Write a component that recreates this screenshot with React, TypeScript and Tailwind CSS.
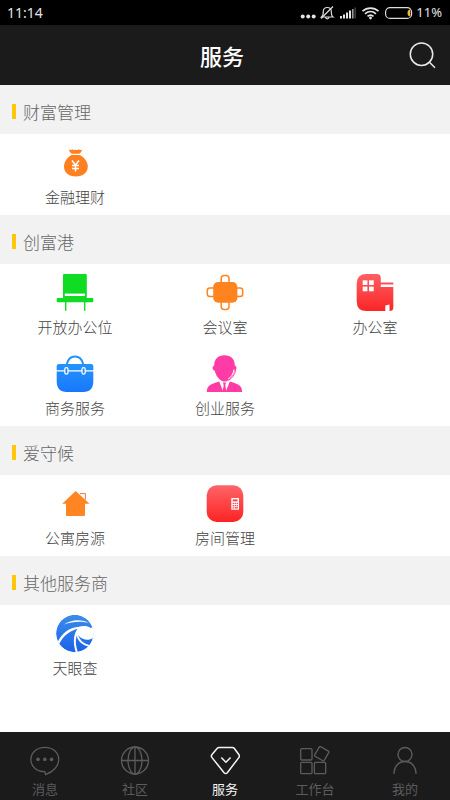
import React from 'react';

interface Service {
  name: string;
  icon: React.ReactNode;
}

interface Section {
  title: string;
  services: Service[];
}

interface Tab {
  name: string;
  icon: React.ReactNode;
}

const MoneyBagIcon = () => (
  <svg viewBox="0 0 38 38" className="size-[38px]" aria-hidden="true">
    <path
      fill="#ff8020"
      d="M13 5.2c1.3 1 2.2.8 3.2.1 1.1.8 2.1.9 3.2.1 1.2.8 2.3.7 3.4-.1.9.7 2 .9 3.2.1-.2 2-1.2 3.4-2.8 4.3h-7.3c-1.7-1-2.6-2.5-2.9-4.5z"
    />
    <path
      fill="#ff8020"
      d="M15.5 11h8.3c4.7 2.7 8 6.9 8 11.6 0 6.2-4.9 9.9-12 9.9S8 28.8 8 22.6c0-4.700 3-8.900 7.500-11.600z"
    />
    <path
      fill="none"
      stroke="#fff"
      strokeWidth="1.5"
      d="M16 16.5l3.500 4.500 3.500-4.500M19.500 21v6.500M16 21.500h7M16 24.500h7"
    />
  </svg>
);

const ChairIcon = () => (
  <svg viewBox="0 0 38 38" className="size-[38px]" aria-hidden="true">
    <g fill="#0fdc22">
      <path d="M8 0h22q.8 0 .8.8V24H7V.8Q7 0 8 0z" />
      <rect x="0.7" y="24" width="36.6" height="4.2" rx="1" />
      <rect x="9" y="28" width="1.4" height="8.8" />
      <rect x="28" y="28" width="1.4" height="8.8" />
    </g>
    <rect x="8.8" y="19.6" width="20.2" height="2.4" fill="#fff" />
  </svg>
);

const MeetingIcon = () => (
  <svg viewBox="0 0 38 38" className="size-[38px]" aria-hidden="true">
    <g fill="none" stroke="#ff8420" strokeWidth="1.5">
      <rect x="15.2" y="1.6" width="7.8" height="12" rx="3" />
      <rect x="15.2" y="23.4" width="7.8" height="12" rx="3" />
      <rect x="1.3" y="14" width="12" height="8.6" rx="2.5" />
      <rect x="24.7" y="14" width="12" height="8.6" rx="2.5" />
    </g>
    <rect x="7.2" y="8" width="24.2" height="20.8" rx="5" fill="#ff8420" />
  </svg>
);

const OfficeIcon = () => (
  <svg viewBox="0 0 38 38" className="size-[38px]" aria-hidden="true">
    <defs>
      <linearGradient id="office" x1="0" y1="0" x2="0" y2="1">
        <stop offset="0" stopColor="#ff6064" />
        <stop offset="1" stopColor="#fb2526" />
      </linearGradient>
    </defs>
    <path
      fill="url(#office)"
      d="M10.5 0H21q3.800 0 3.800 3.800V8.600h12.500v1.900H24.800V13h12.500v20.500q0 3.500-3.800 3.500v-6.500l-4.200 1V37H10.500Q.7 37 .7 27.500V9.500Q.7 0 10.500 0z"
    />
    <g fill="#fff">
      <rect x="6.7" y="6.3" width="4.7" height="4.7" />
      <rect x="13" y="6.3" width="4.7" height="4.7" />
      <rect x="6.7" y="12.6" width="4.7" height="4.7" />
      <rect x="13" y="12.6" width="4.7" height="4.7" />
    </g>
  </svg>
);

const BriefcaseIcon = () => (
  <svg viewBox="0 0 38 38" className="size-[38px]" aria-hidden="true">
    <defs>
      <linearGradient id="briefcase" x1="0" y1="0" x2="0" y2="1">
        <stop offset="0" stopColor="#2593fb" />
        <stop offset="1" stopColor="#1878fc" />
      </linearGradient>
    </defs>
    <path fill="none" stroke="#2593fb" strokeWidth="2" d="M10.800 9C12 4 15 1.400 19 1.400S26 4 27.200 9" />
    <path
      fill="url(#briefcase)"
      d="M3 9h32q2.300 0 2.300 2.300V26q0 11-10 11H10.700Q.7 37 .7 26V11.300Q.7 9 3 9z"
    />
    <path stroke="#fff" strokeWidth="1.3" d="M0 15.800h38" />
    <g fill="#1f88fb" stroke="#fff" strokeWidth="1.3">
      <rect x="8.800" y="12.600" width="3.2" height="6.6" rx="1.6" />
      <rect x="26" y="12.600" width="3.2" height="6.6" rx="1.6" />
    </g>
  </svg>
);

const AgentIcon = () => (
  <svg viewBox="0 0 38 38" className="size-[38px]" aria-hidden="true">
    <g fill="#ff3ca5">
      <path d="M18.500.2c6.300 0 10.500 4 10.300 10.300 2.300.7 2.200 4.700-.3 5.200-1.200 5.200-4.500 8.800-7.200 10.200-1.700.9-3.700.9-5.400 0-2.700-1.400-6-5-7.200-10.200-2.500-.5-2.800-4.500-.5-5.200C8 4.200 12.200.2 18.500.2z" />
      <path d="M.8 37c.2-6 2.800-7.600 12.400-10.500l4.200 10.500zM19.600 37l4.200-10.500C33.500 29.400 36 31 36.200 37z" />
      <path d="M17 27.500h3l-.7 2.800L20.500 37h-4l1.200-6.700z" />
    </g>
    <path fill="none" stroke="#fff" strokeWidth="1" d="M28 14.500c-.8 4.500-2.800 7.700-6 9.700" />
    <path fill="none" stroke="#ff3ca5" strokeWidth="1" d="M29.600 15c-.8 5-3.600 8.500-7.400 10.400" />
  </svg>
);

const HouseIcon = () => (
  <svg viewBox="0 0 38 38" className="size-[38px]" aria-hidden="true">
    <path fill="#ff8522" d="M19.700 6l13.800 12.700H29V30q0 1-1 1H11q-1 0-1-1V18.700H6.200z" />
    <path fill="none" stroke="#ef7048" strokeWidth="1" d="M24 8.600h5.400v6" />
  </svg>
);

const RoomIcon = () => (
  <svg viewBox="0 0 38 38" className="size-[38px]" aria-hidden="true">
    <defs>
      <linearGradient id="room" x1="0" y1="0" x2="0" y2="1">
        <stop offset="0" stopColor="#ff6468" />
        <stop offset="1" stopColor="#fc2323" />
      </linearGradient>
    </defs>
    <rect x="0.7" y="0.3" width="36.6" height="36.7" rx="10" fill="url(#room)" />
    <rect x="25.3" y="13" width="7.7" height="11.7" fill="#fff" />
    <g fill="#fa4346">
      <rect x="26.8" y="14.4" width="4.7" height="2" />
      <rect x="26.6" y="17.8" width="1.3" height="1.3" />
      <rect x="28.6" y="17.8" width="1.3" height="1.3" />
      <rect x="30.6" y="17.8" width="1.3" height="1.3" />
      <rect x="26.6" y="20" width="1.3" height="1.3" />
      <rect x="28.6" y="20" width="1.3" height="1.3" />
      <rect x="30.6" y="20" width="1.3" height="1.3" />
      <rect x="26.6" y="22.2" width="1.3" height="1.3" />
      <rect x="28.6" y="22.2" width="3.3" height="1.3" />
    </g>
  </svg>
);

const EyeCheckIcon = () => (
  <svg viewBox="0 0 38 38" className="size-[38px]" aria-hidden="true">
    <defs>
      <linearGradient id="eye" x1="0" y1="0" x2="0" y2="1">
        <stop offset="0" stopColor="#3b8dea" />
        <stop offset="1" stopColor="#1c62e8" />
      </linearGradient>
      <clipPath id="eye-clip">
        <circle cx="18.8" cy="18.5" r="18.7" />
      </clipPath>
    </defs>
    <g clipPath="url(#eye-clip)">
      <circle cx="18.8" cy="18.5" r="18.7" fill="url(#eye)" />
      {/* Top wisp */}
      <path fill="#fff" d="M8 9.500C14 4.800 25 3.300 34 8.200 26 5.800 16.500 6.200 8 9.500z" />
      {/* Pupil, open on the right */}
      <path
        fill="#fff"
        d="M22 12.200c4.500-1.700 9.500-1.400 12.500.8 1-.3 2-.9 2.500-1.500l2 8c-1 3-3.200 5-6.500 5.200-4 .3-8-1.400-10.300-4.500-1.500-2.200-1.700-5.500-.2-8z"
      />
      {/* Blades */}
      <path fill="#fff" d="M1 28.500C5 19 12.500 12.500 23.500 11.800l1 1.700C14.500 14.500 7 20.500 2.500 30.500z" />
      <path fill="#fff" d="M20.500 15c-3.500 7-3.300 14.500-.5 23h2.200c-3-8-3.200-14.500-.2-21z" />
      <path fill="#fff" d="M21.500 17.500c1 6.500 5.500 11.500 14 13l-1 1.500c-9-1.500-13.800-7-14.200-13.500z" />
    </g>
  </svg>
);

const SearchIcon = () => (
  <svg viewBox="0 0 28 28" className="size-7" fill="none" stroke="#e8e8e8" strokeWidth="1.5" aria-hidden="true">
    <circle cx="13.5" cy="13.2" r="11.2" />
    <path d="M21.500 21.200l5.500 5.600" />
  </svg>
);

const StatusIcons = () => (
  <svg viewBox="0 0 114 16" className="h-4 w-[114px]" fill="none" aria-hidden="true">
    {/* More dots */}
    <g fill="#e4e4e4">
      <circle cx="2.7" cy="11.5" r="2" />
      <circle cx="8.2" cy="11.5" r="2" />
      <circle cx="13.7" cy="11.5" r="2" />
    </g>
    {/* Muted bell */}
    <g stroke="#dcdcdc" strokeWidth="1.2">
      <path d="M21.500 12h11.500c-1.800-1.300-1.700-3-1.700-5.500 0-2.400-1.300-4-4-4s-4 1.600-4 4c0 2.500 0 4.200-1.800 5.500zM25.500 12.500c.3 1.700 3.200 1.700 3.500 0" />
      <path d="M21 13.500L33 1.500" />
    </g>
    {/* Signal */}
    <g fill="#e4e4e4">
      <rect x="40" y="11" width="2" height="2.5" />
      <rect x="43" y="9.5" width="2" height="4" />
      <rect x="46" y="7.5" width="2" height="6" />
      <rect x="49" y="5.5" width="2" height="8" />
      <rect x="52" y="4" width="1.6" height="9.5" fill="#9a9a9a" />
      <rect x="54.5" y="2.5" width="1.3" height="11" fill="#4a4a4a" />
    </g>
    {/* Wifi */}
    <g stroke="#e4e4e4" strokeWidth="1.7">
      <path d="M62.500 6.200c4.500-4.200 11.500-4.200 16 0M65 8.900c3.300-3 7.700-3 11 0M67.500 11.300c2-1.700 4-1.700 6 0" />
    </g>
    <circle cx="70.500" cy="13" r="1.4" fill="#e4e4e4" />
    {/* Battery */}
    <rect x="85.600" y="2.600" width="26" height="10.800" rx="4.5" stroke="#dcdcdc" strokeWidth="1.2" />
    <path d="M110.300 4.500v7q-2.800-.3-2.800-3.500t2.800-3.500z" fill="#f5b83d" />
  </svg>
);

const MessageIcon = () => (
  <svg viewBox="0 0 30 30" className="size-[30px]" fill="none" stroke="currentColor" strokeWidth="1.3" aria-hidden="true">
    <path
      strokeLinejoin="round"
      d="M15 1.400c7.800 0 13.700 5 13.700 12.100 0 6.500-5.500 12.500-13.200 15.200l-.5-3C6.500 25.500.9 20.500.9 13.500.9 6.400 7.200 1.400 15 1.400z"
    />
    <g fill="currentColor" stroke="none">
      <circle cx="8" cy="13.400" r="1.8" />
      <circle cx="14.800" cy="13.400" r="1.8" />
      <circle cx="21.600" cy="13.400" r="1.8" />
    </g>
  </svg>
);

const GlobeIcon = () => (
  <svg viewBox="0 0 30 30" className="size-[30px]" fill="none" stroke="currentColor" strokeWidth="1.3" aria-hidden="true">
    <circle cx="15" cy="14.5" r="13.5" />
    <ellipse cx="15" cy="14.5" rx="7" ry="13.5" />
    <path d="M15 1v27M1.500 14.500h27" />
  </svg>
);

const DiamondIcon = () => (
  <svg
    viewBox="0 0 30 30"
    className="size-[30px]"
    fill="none"
    stroke="currentColor"
    strokeWidth="1.5"
    strokeLinejoin="round"
    aria-hidden="true"
  >
    <path d="M9 1.500h13.500q1 0 1.700.8l4.600 6.200q1.200 1.500 0 3.100L17.300 26.700q-1.600 1.700-3.200 0L2 11.600q-1.300-1.600 0-3.100l5.300-6.200q.7-.8 1.700-.8z" />
    <path d="M11.300 11.500l4.600 4.800 4.700-4.800" />
  </svg>
);

const WorkbenchIcon = () => (
  <svg viewBox="0 0 30 30" className="size-[30px]" fill="none" stroke="currentColor" strokeWidth="1.3" aria-hidden="true">
    <rect x="0.7" y="2.7" width="11.3" height="11.3" rx="1" />
    <rect x="0.7" y="16.4" width="11.3" height="11.3" rx="1" />
    <rect x="14.4" y="16.4" width="11.3" height="11.3" rx="1" />
    <rect x="16.2" y="2.2" width="11" height="11" rx="1" transform="rotate(30 21.700 7.700)" />
  </svg>
);

const PersonIcon = () => (
  <svg viewBox="0 0 30 30" className="size-[30px]" fill="none" stroke="currentColor" strokeWidth="1.4" aria-hidden="true">
    <circle cx="15" cy="8.5" r="7" />
    <path d="M4 28c0-7.500 4.500-12.500 11-12.500s11 5 11 12.500" />
  </svg>
);

const sections: Section[] = [
  {
    title: '财富管理',
    services: [{ name: '金融理财', icon: <MoneyBagIcon /> }],
  },
  {
    title: '创富港',
    services: [
      { name: '开放办公位', icon: <ChairIcon /> },
      { name: '会议室', icon: <MeetingIcon /> },
      { name: '办公室', icon: <OfficeIcon /> },
      { name: '商务服务', icon: <BriefcaseIcon /> },
      { name: '创业服务', icon: <AgentIcon /> },
    ],
  },
  {
    title: '爱守候',
    services: [
      { name: '公寓房源', icon: <HouseIcon /> },
      { name: '房间管理', icon: <RoomIcon /> },
    ],
  },
  {
    title: '其他服务商',
    services: [{ name: '天眼查', icon: <EyeCheckIcon /> }],
  },
];

const tabs: Tab[] = [
  { name: '消息', icon: <MessageIcon /> },
  { name: '社区', icon: <GlobeIcon /> },
  { name: '服务', icon: <DiamondIcon /> },
  { name: '工作台', icon: <WorkbenchIcon /> },
  { name: '我的', icon: <PersonIcon /> },
];

const StatusBar = () => (
  <div className="flex h-[25px] items-center justify-between bg-black pl-[7px] pr-2 font-['Noto_Sans','Noto_Sans_CJK_SC',sans-serif] text-[#e4e4e4]">
    <span className="text-sm">11:14</span>
    <div className="flex items-center gap-0.5">
      <StatusIcons />
      <span className="text-[13px]">11%</span>
    </div>
  </div>
);

const ServiceSection = ({ title, services }: Section) => (
  <section>
    <div className="flex h-[49px] items-center gap-[7px] bg-[#f2f2f2] pl-3 pt-1">
      <span className="h-[15px] w-1 bg-[#ffc60c]" />
      <h2 className="text-[17px] font-light leading-6 text-[#666]">{title}</h2>
    </div>
    <div className="grid grid-cols-3">
      {services.map((service) => (
        <button key={service.name} className="flex flex-col items-center gap-1 pb-[7px] pt-2.5">
          {service.icon}
          <span className="text-[15px] font-light leading-[22px] text-[#444]">{service.name}</span>
        </button>
      ))}
    </div>
  </section>
);

export default function App() {
  const [activeTab, setActiveTab] = React.useState('服务');

  return (
    <div className="flex min-h-screen flex-col bg-white font-['Noto_Sans_CJK_SC',sans-serif]">
      <StatusBar />

      {/* Title bar */}
      <header className="grid h-[60px] grid-cols-[1fr_auto_1fr] items-center bg-[#1b1b1b] pl-2 pr-3.5">
        <h1 className="col-start-2 text-[22px] font-medium text-white">服务</h1>
        <button className="justify-self-end" aria-label="搜索">
          <SearchIcon />
        </button>
      </header>

      <main className="flex-1">
        {sections.map((section) => (
          <ServiceSection key={section.title} {...section} />
        ))}
      </main>

      {/* Bottom tabs */}
      <nav className="grid grid-cols-5 bg-[#1b1b1b]">
        {tabs.map((tab) => (
          <button
            key={tab.name}
            onClick={() => setActiveTab(tab.name)}
            className={`flex flex-col items-center gap-[3px] pb-px pt-3.5 ${
              activeTab === tab.name ? 'text-[#f4f4f4]' : 'text-[#5c5c5c]'
            }`}
          >
            {tab.icon}
            <span className="text-[13px] leading-5">{tab.name}</span>
          </button>
        ))}
      </nav>
    </div>
  );
}
